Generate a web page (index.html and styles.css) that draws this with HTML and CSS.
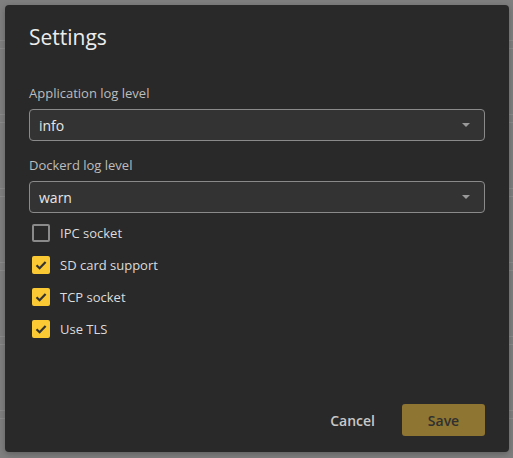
FILE: index.html
```html
<!DOCTYPE html>
<html>
<head>
<meta charset="utf-8">
<link rel="stylesheet" href="styles.css">
</head>
<body>
<div class="dialog">
  <h1 class="title">Settings</h1>
  <div class="field">
    <label class="field-label">Application log level</label>
    <div class="select"><span>info</span><span class="caret"></span></div>
  </div>
  <div class="field">
    <label class="field-label">Dockerd log level</label>
    <div class="select"><span>warn</span><span class="caret"></span></div>
  </div>
  <div class="checks">
    <div class="check-row"><span class="box"></span><span>IPC socket</span></div>
    <div class="check-row"><span class="box on"><svg viewBox="0 0 18 18" width="18" height="18"><path d="M4.5 9.2 L7.6 12.2 L13.6 6" fill="none" stroke="#333333" stroke-width="2.2"/></svg></span><span>SD card support</span></div>
    <div class="check-row"><span class="box on"><svg viewBox="0 0 18 18" width="18" height="18"><path d="M4.5 9.2 L7.6 12.2 L13.6 6" fill="none" stroke="#333333" stroke-width="2.2"/></svg></span><span>TCP socket</span></div>
    <div class="check-row"><span class="box on"><svg viewBox="0 0 18 18" width="18" height="18"><path d="M4.5 9.2 L7.6 12.2 L13.6 6" fill="none" stroke="#333333" stroke-width="2.2"/></svg></span><span>Use TLS</span></div>
  </div>
  <div class="actions">
    <div class="btn cancel" role="button">Cancel</div>
    <div class="btn save" role="button"><span class="save-text">Save</span></div>
  </div>
</div>
</body>
</html>
```
FILE: styles.css
```css
html, body {
  margin: 0;
  padding: 0;
}
body {
  width: 513px;
  height: 458px;
  overflow: hidden;
  background-color: #7f7f7f;
  background-image: repeating-linear-gradient(to bottom,
    transparent 0px, transparent 40px,
    #8b8b8b 40px, #8b8b8b 41px,
    transparent 41px, transparent 48px,
    #8b8b8b 48px, #8b8b8b 49px,
    transparent 49px, transparent 74px);
  font-family: "Open Sans", "Noto Sans", sans-serif;
  padding: 5px 0 0 5px;
  box-sizing: border-box;
}
.dialog {
  width: 504px;
  height: 447px;
  box-sizing: border-box;
  background: #292929;
  border-radius: 4px;
  padding: 16px 24px 16px 24px;
  display: flex;
  flex-direction: column;
  box-shadow: 0 2px 6px rgba(0,0,0,0.25);
}
.title {
  margin: 0;
  font-size: 21px;
  line-height: 32px;
  font-weight: 400;
  color: #ececec;
}
.field {
  display: flex;
  flex-direction: column;
}
.field:first-of-type {
  margin-top: 31px;
}
.field + .field {
  margin-top: 15px;
}
.field-label {
  font-size: 13px;
  line-height: 18px;
  color: #bdbdbd;
  margin-bottom: 7px;
}
.select {
  height: 32px;
  box-sizing: border-box;
  border: 1px solid #8a8a8a;
  border-radius: 4px;
  background: #333333;
  display: flex;
  align-items: center;
  justify-content: space-between;
  padding: 0 14px 0 9px;
  font-size: 14px;
  color: #e6e6e6;
}
.caret {
  width: 0;
  height: 0;
  border-left: 4px solid transparent;
  border-right: 4px solid transparent;
  border-top: 4px solid #9a9a9a;
}
.checks {
  margin-top: 4px;
  display: flex;
  flex-direction: column;
}
.check-row {
  height: 32px;
  display: flex;
  align-items: center;
  font-size: 13px;
  color: #dcdcdc;
  padding-left: 3px;
}
.box {
  width: 18px;
  height: 18px;
  box-sizing: border-box;
  border: 2px solid #8a8a8a;
  border-radius: 2px;
  margin-right: 10px;
  display: flex;
  align-items: center;
  justify-content: center;
}
.box.on {
  border: none;
  background: #fbc933;
}
.actions {
  margin-top: auto;
  display: flex;
  justify-content: flex-end;
  align-items: center;
}
.btn {
  font-size: 14px;
  font-weight: 600;
  height: 32px;
  border-radius: 3px;
  display: flex;
  align-items: center;
  justify-content: center;
  cursor: pointer;
}
.cancel {
  color: #c8c8c8;
  padding: 0 16px;
  margin-right: 11px;
}
.save {
  width: 83px;
  background-color: #8e7531;
}
.save-text {
  color: #303030;
}
```
